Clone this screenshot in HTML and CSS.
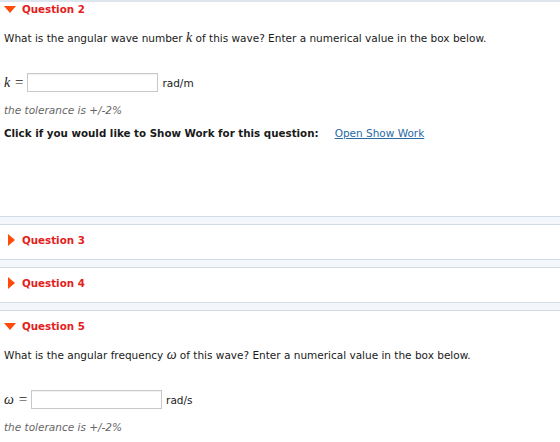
FILE: index.html
```html
<!DOCTYPE html>
<html>
<head>
<meta charset="utf-8">
<link rel="stylesheet" href="styles.css">
</head>
<body>
<div class="page">
  <div class="strip"></div>

  <section class="question open first">
    <h3 class="qhead">
      <svg class="tri-down" width="12" height="7" viewBox="0 0 12 7"><polygon points="0,0 12,0 6,7"/></svg>
      <span>Question 2</span>
    </h3>
    <p class="prompt">What is the angular wave number <i class="math">k</i> of this wave? Enter a numerical value in the box below.</p>
    <div class="answer">
      <span class="lhs"><i class="math">k</i> =</span>
      <input class="box" type="text">
      <span class="unit">rad/m</span>
    </div>
    <p class="tol">the tolerance is +/-2%</p>
    <p class="work"><b>Click if you would like to Show Work for this question:</b><a href="#">Open Show Work</a></p>
  </section>

  <div class="sep"></div>

  <section class="question closed">
    <h3 class="qhead">
      <svg class="tri-right" width="7" height="12" viewBox="0 0 7 12"><polygon points="0,0 7,6 0,12"/></svg>
      <span>Question 3</span>
    </h3>
  </section>

  <div class="sep"></div>

  <section class="question closed">
    <h3 class="qhead">
      <svg class="tri-right" width="7" height="12" viewBox="0 0 7 12"><polygon points="0,0 7,6 0,12"/></svg>
      <span>Question 4</span>
    </h3>
  </section>

  <div class="sep"></div>

  <section class="question open">
    <h3 class="qhead">
      <svg class="tri-down" width="12" height="7" viewBox="0 0 12 7"><polygon points="0,0 12,0 6,7"/></svg>
      <span>Question 5</span>
    </h3>
    <p class="prompt">What is the angular frequency <i class="math">ω</i> of this wave? Enter a numerical value in the box below.</p>
    <div class="answer">
      <span class="lhs"><i class="math">ω</i> =</span>
      <input class="box" type="text">
      <span class="unit">rad/s</span>
    </div>
    <p class="tol">the tolerance is +/-2%</p>
  </section>
</div>
</body>
</html>
```

FILE: styles.css
```css
html, body {
  margin: 0;
  padding: 0;
  background: #fff;
}

body {
  font-family: "DejaVu Sans", Verdana, sans-serif;
  font-size: 10.5px;
  color: #1a1a1a;
}

.page {
  width: 560px;
  height: 442px;
  overflow: hidden;
}

.strip {
  height: 2px;
  background: #dfe5ec;
}

.question {
  padding: 8px 0 0 4px;
}

.question.first {
  padding-top: 0;
  height: 214px;
}

.question.closed {
  padding: 8px 0 12px 4px;
}

.qhead {
  display: flex;
  align-items: center;
  height: 14px;
  margin: 0;
  font-size: 10.3px;
  font-weight: bold;
  color: #e3211c;
}

.qhead svg {
  fill: #ff4a0a;
  flex: none;
}

.tri-down {
  margin-right: 6px;
}

.tri-right {
  margin-left: 4px;
  margin-right: 7px;
}

.prompt {
  margin: 14px 0 0;
  line-height: 15px;
}

.math {
  font-family: "Liberation Serif", "DejaVu Serif", serif;
  font-size: 14px;
  font-style: italic;
}

.answer {
  display: flex;
  align-items: center;
  margin-top: 27px;
  height: 19px;
}

.lhs {
  font-family: "Liberation Serif", serif;
  font-size: 15px;
  margin-right: 4px;
  white-space: pre;
  word-spacing: 1px;
}

.box {
  box-sizing: border-box;
  width: 131px;
  height: 19px;
  margin: 0 4px 0 0;
  padding: 0;
  border: 1px solid #c9c9c9;
  border-radius: 0;
  background: #fff;
  box-shadow: inset 0 1px 1px rgba(0, 0, 0, 0.06);
}

.unit {
  font-size: 10.5px;
}

.tol {
  margin: 11px 0 0;
  line-height: 14px;
  font-style: italic;
  color: #666;
}

.work {
  margin: 9px 0 0;
  line-height: 14px;
}

.work b {
  font-size: 10.3px;
}

.work a {
  margin-left: 16px;
  color: #2b6aa3;
  text-decoration: underline;
}

.sep {
  height: 7px;
  border-top: 1px solid #d3dbe4;
  border-bottom: 1px solid #d3dbe4;
  background: #f3f6fa;
}
```
